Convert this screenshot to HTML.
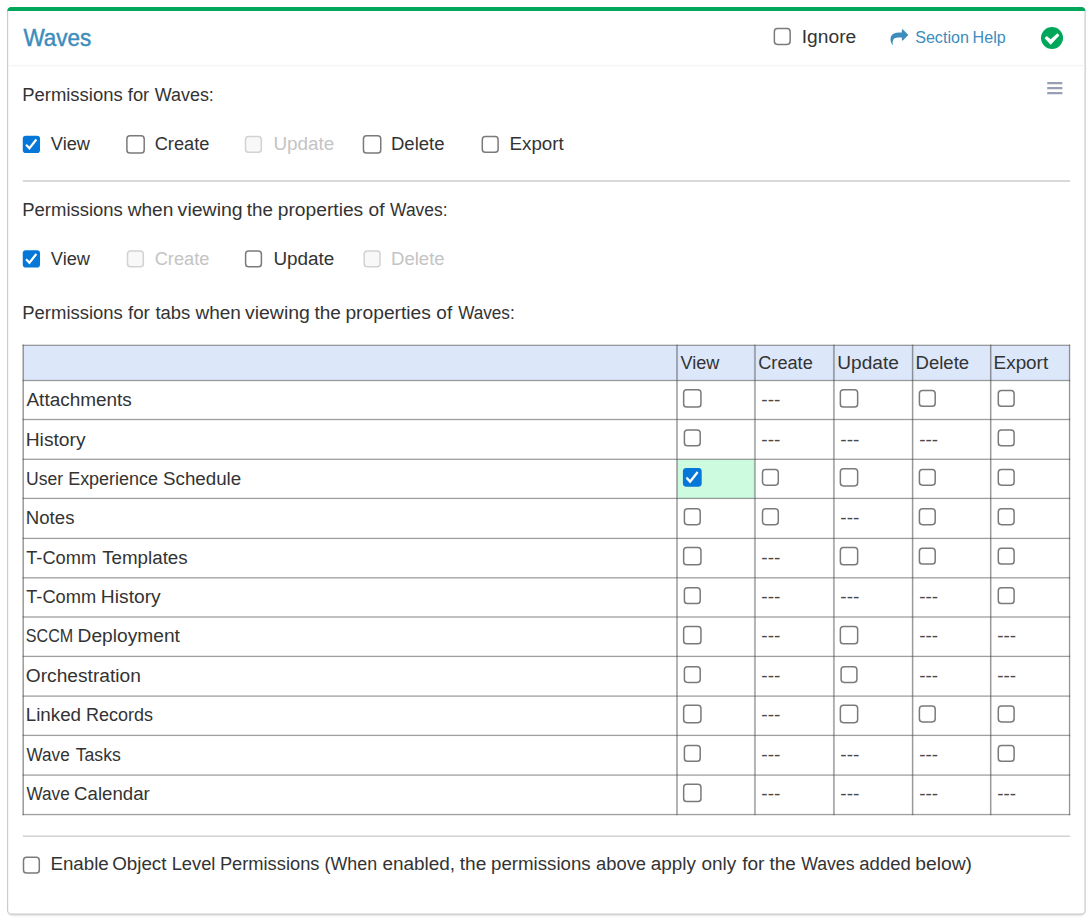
<!DOCTYPE html>
<html lang="en"><head><meta charset="utf-8"><title>Waves permissions</title>
<style>
html,body{margin:0;padding:0;background:#fff;}
body{width:1091px;height:921px;overflow:hidden;}
svg{display:block}
svg text{font-family:"Liberation Sans",sans-serif;white-space:pre}
</style></head><body>
<svg width="1091" height="921" viewBox="0 0 1091 921">
<defs><filter id="sh" x="-5%" y="-5%" width="110%" height="110%"><feGaussianBlur stdDeviation="1.2"/></filter></defs>
<rect x="8.5" y="10" width="1076" height="905.6" rx="4" fill="#000" opacity="0.16" filter="url(#sh)"/>
<rect x="7.6" y="7.6" width="1077.5" height="906.6" rx="4" fill="#fff" stroke="#cbcbcb" stroke-width="1.2"/>
<path d="M7.4 11 V10.6 A4 4 0 0 1 11.4 6.9 H1081.3 A4 4 0 0 1 1085.3 10.6 V11 Z" fill="#00a65a"/>
<rect x="8.2" y="64.9" width="1076.2" height="1.4" fill="#f4f4f4"/>
<rect x="22.8" y="180" width="1047.3" height="2" fill="#d9d9d9"/>
<rect x="22.8" y="835.4" width="1047.3" height="1.6" fill="#d4d4d4"/>
<g transform="translate(890.5,28.6) scale(0.00985)" fill="#3c8dbc"><path d="M1792 640q0 26-19 45l-512 512q-19 19-45 19t-45-19-19-45v-256h-224q-98 0-175.500 6t-154 21.500-133 42.500-105.500 69.500-80 101-48.500 138.500-17.500 181q0 55 5 123 0 6 2.500 23.500t2.500 26.500q0 15-8.500 25t-23.500 10q-16 0-28-17-7-9-13-22t-13.500-30-10.500-24q-127-285-127-451 0-199 53-333 162-403 875-403h224v-256q0-26 19-45t45-19 45 19l512 512q19 19 19 45z"/></g>
<circle cx="1052" cy="38" r="11" fill="#00a65a"/>
<polygon points="1044.6,38.16 1046.68,36.07 1050.68,39.37 1057.45,33.29 1059.36,35.38 1050.68,44.76" fill="#fff"/>
<rect x="1047.2" y="82.05" width="15.2" height="2.3" rx="0.5" fill="#97a0b3"/>
<rect x="1047.2" y="87.00" width="15.2" height="2.3" rx="0.5" fill="#97a0b3"/>
<rect x="1047.2" y="91.95" width="15.2" height="2.3" rx="0.5" fill="#97a0b3"/>
<rect x="774.35" y="28.60" width="15.80" height="15.80" rx="3.1" fill="#fff" stroke="#7a7a7a" stroke-width="1.5"/>
<rect x="22.75" y="135.80" width="17.30" height="17.30" rx="3.10" fill="#0577d8"/><polygon points="25.33,145.53 26.70,144.01 29.38,146.59 35.52,138.78 37.19,140.36 29.44,150.09" fill="#fff"/>
<rect x="126.90" y="135.80" width="17.30" height="17.30" rx="3.1" fill="#fff" stroke="#7a7a7a" stroke-width="1.5"/>
<rect x="245.50" y="136.55" width="15.80" height="15.80" rx="3.1" fill="#f8f8f8" stroke="#d2d2d2" stroke-width="1.5"/>
<rect x="363.45" y="135.80" width="17.30" height="17.30" rx="3.1" fill="#fff" stroke="#7a7a7a" stroke-width="1.5"/>
<rect x="482.30" y="136.55" width="15.80" height="15.80" rx="3.1" fill="#fff" stroke="#7a7a7a" stroke-width="1.5"/>
<rect x="22.75" y="250.20" width="17.30" height="17.30" rx="3.10" fill="#0577d8"/><polygon points="25.33,259.93 26.70,258.41 29.38,260.99 35.52,253.18 37.19,254.76 29.44,264.49" fill="#fff"/>
<rect x="127.50" y="250.95" width="15.80" height="15.80" rx="3.1" fill="#f8f8f8" stroke="#d2d2d2" stroke-width="1.5"/>
<rect x="245.60" y="250.95" width="15.80" height="15.80" rx="3.1" fill="#fff" stroke="#7a7a7a" stroke-width="1.5"/>
<rect x="364.20" y="250.95" width="15.80" height="15.80" rx="3.1" fill="#f8f8f8" stroke="#d2d2d2" stroke-width="1.5"/>
<rect x="23.50" y="857.30" width="15.80" height="15.80" rx="3.1" fill="#fff" stroke="#7a7a7a" stroke-width="1.5"/>
<rect x="23.2" y="345.3" width="1046.35" height="35.20" fill="#dce7fa"/>
<rect x="677.00" y="459.30" width="77.95" height="39.10" fill="#cdfbe0"/>
<rect x="22.50" y="344.65" width="1047.70" height="1.3" fill="#505050" fill-opacity="0.55"/>
<rect x="22.50" y="379.85" width="1047.70" height="1.3" fill="#505050" fill-opacity="0.55"/>
<rect x="22.50" y="418.85" width="1047.70" height="1.3" fill="#505050" fill-opacity="0.55"/>
<rect x="22.50" y="458.65" width="1047.70" height="1.3" fill="#505050" fill-opacity="0.55"/>
<rect x="22.50" y="497.75" width="1047.70" height="1.3" fill="#505050" fill-opacity="0.55"/>
<rect x="22.50" y="537.75" width="1047.70" height="1.3" fill="#505050" fill-opacity="0.55"/>
<rect x="22.50" y="577.15" width="1047.70" height="1.3" fill="#505050" fill-opacity="0.55"/>
<rect x="22.50" y="616.35" width="1047.70" height="1.3" fill="#505050" fill-opacity="0.55"/>
<rect x="22.50" y="655.75" width="1047.70" height="1.3" fill="#505050" fill-opacity="0.55"/>
<rect x="22.50" y="695.45" width="1047.70" height="1.3" fill="#505050" fill-opacity="0.55"/>
<rect x="22.50" y="734.75" width="1047.70" height="1.3" fill="#505050" fill-opacity="0.55"/>
<rect x="22.50" y="774.45" width="1047.70" height="1.3" fill="#505050" fill-opacity="0.55"/>
<rect x="22.50" y="813.90" width="1047.70" height="1.3" fill="#505050" fill-opacity="0.55"/>
<rect x="22.50" y="344.65" width="1.4" height="470.55" fill="#505050" fill-opacity="0.62"/>
<rect x="676.00" y="344.65" width="2.0" height="470.55" fill="#505050" fill-opacity="0.43"/>
<rect x="753.95" y="344.65" width="2.0" height="470.55" fill="#505050" fill-opacity="0.43"/>
<rect x="832.95" y="344.65" width="1.9" height="470.55" fill="#505050" fill-opacity="0.46"/>
<rect x="911.85" y="344.65" width="1.5" height="470.55" fill="#505050" fill-opacity="0.58"/>
<rect x="989.95" y="344.65" width="1.5" height="470.55" fill="#505050" fill-opacity="0.58"/>
<rect x="1068.90" y="344.65" width="1.3" height="470.55" fill="#505050" fill-opacity="0.62"/>
<rect x="683.65" y="389.75" width="17.30" height="17.30" rx="3.1" fill="#fff" stroke="#7a7a7a" stroke-width="1.5"/>
<rect x="840.35" y="389.75" width="17.30" height="17.30" rx="3.1" fill="#fff" stroke="#7a7a7a" stroke-width="1.5"/>
<rect x="919.40" y="390.50" width="15.80" height="15.80" rx="3.1" fill="#fff" stroke="#7a7a7a" stroke-width="1.5"/>
<rect x="998.30" y="390.50" width="15.80" height="15.80" rx="3.1" fill="#fff" stroke="#7a7a7a" stroke-width="1.5"/>
<rect x="684.40" y="429.95" width="15.80" height="15.80" rx="3.1" fill="#fff" stroke="#7a7a7a" stroke-width="1.5"/>
<rect x="998.30" y="429.95" width="15.80" height="15.80" rx="3.1" fill="#fff" stroke="#7a7a7a" stroke-width="1.5"/>
<rect x="682.90" y="467.90" width="18.80" height="18.80" rx="3.37" fill="#0577d8"/><polygon points="685.70,478.47 687.19,476.82 690.10,479.63 696.78,471.14 698.59,472.86 690.17,483.43" fill="#fff"/>
<rect x="762.50" y="469.40" width="15.80" height="15.80" rx="3.1" fill="#fff" stroke="#7a7a7a" stroke-width="1.5"/>
<rect x="840.35" y="468.65" width="17.30" height="17.30" rx="3.1" fill="#fff" stroke="#7a7a7a" stroke-width="1.5"/>
<rect x="919.40" y="469.40" width="15.80" height="15.80" rx="3.1" fill="#fff" stroke="#7a7a7a" stroke-width="1.5"/>
<rect x="998.30" y="469.40" width="15.80" height="15.80" rx="3.1" fill="#fff" stroke="#7a7a7a" stroke-width="1.5"/>
<rect x="684.40" y="508.85" width="15.80" height="15.80" rx="3.1" fill="#fff" stroke="#7a7a7a" stroke-width="1.5"/>
<rect x="762.50" y="508.85" width="15.80" height="15.80" rx="3.1" fill="#fff" stroke="#7a7a7a" stroke-width="1.5"/>
<rect x="919.40" y="508.85" width="15.80" height="15.80" rx="3.1" fill="#fff" stroke="#7a7a7a" stroke-width="1.5"/>
<rect x="998.30" y="508.85" width="15.80" height="15.80" rx="3.1" fill="#fff" stroke="#7a7a7a" stroke-width="1.5"/>
<rect x="683.65" y="547.55" width="17.30" height="17.30" rx="3.1" fill="#fff" stroke="#7a7a7a" stroke-width="1.5"/>
<rect x="840.35" y="547.55" width="17.30" height="17.30" rx="3.1" fill="#fff" stroke="#7a7a7a" stroke-width="1.5"/>
<rect x="919.40" y="548.30" width="15.80" height="15.80" rx="3.1" fill="#fff" stroke="#7a7a7a" stroke-width="1.5"/>
<rect x="998.30" y="548.30" width="15.80" height="15.80" rx="3.1" fill="#fff" stroke="#7a7a7a" stroke-width="1.5"/>
<rect x="684.40" y="587.75" width="15.80" height="15.80" rx="3.1" fill="#fff" stroke="#7a7a7a" stroke-width="1.5"/>
<rect x="998.30" y="587.75" width="15.80" height="15.80" rx="3.1" fill="#fff" stroke="#7a7a7a" stroke-width="1.5"/>
<rect x="683.65" y="626.45" width="17.30" height="17.30" rx="3.1" fill="#fff" stroke="#7a7a7a" stroke-width="1.5"/>
<rect x="840.35" y="626.45" width="17.30" height="17.30" rx="3.1" fill="#fff" stroke="#7a7a7a" stroke-width="1.5"/>
<rect x="684.40" y="666.65" width="15.80" height="15.80" rx="3.1" fill="#fff" stroke="#7a7a7a" stroke-width="1.5"/>
<rect x="841.10" y="666.65" width="15.80" height="15.80" rx="3.1" fill="#fff" stroke="#7a7a7a" stroke-width="1.5"/>
<rect x="683.65" y="705.35" width="17.30" height="17.30" rx="3.1" fill="#fff" stroke="#7a7a7a" stroke-width="1.5"/>
<rect x="840.35" y="705.35" width="17.30" height="17.30" rx="3.1" fill="#fff" stroke="#7a7a7a" stroke-width="1.5"/>
<rect x="919.40" y="706.10" width="15.80" height="15.80" rx="3.1" fill="#fff" stroke="#7a7a7a" stroke-width="1.5"/>
<rect x="998.30" y="706.10" width="15.80" height="15.80" rx="3.1" fill="#fff" stroke="#7a7a7a" stroke-width="1.5"/>
<rect x="684.40" y="745.55" width="15.80" height="15.80" rx="3.1" fill="#fff" stroke="#7a7a7a" stroke-width="1.5"/>
<rect x="998.30" y="745.55" width="15.80" height="15.80" rx="3.1" fill="#fff" stroke="#7a7a7a" stroke-width="1.5"/>
<rect x="683.65" y="784.25" width="17.30" height="17.30" rx="3.1" fill="#fff" stroke="#7a7a7a" stroke-width="1.5"/>
<text y="46.00" font-size="23.2" fill="#3c8dbc" stroke="#3c8dbc" stroke-width="0.45"><tspan x="23.39" textLength="67.94" lengthAdjust="spacingAndGlyphs">Waves</tspan></text>
<text y="43.00" font-size="18.0" fill="#333333" ><tspan x="801.77" textLength="54.45" lengthAdjust="spacingAndGlyphs">Ignore</tspan></text>
<text y="43.00" font-size="15.6" fill="#3c8dbc" ><tspan x="915.17" textLength="53.76" lengthAdjust="spacingAndGlyphs">Section</tspan> <tspan x="972.55" textLength="33.12" lengthAdjust="spacingAndGlyphs">Help</tspan></text>
<text y="101.00" font-size="18.0" fill="#333333" ><tspan x="22.24" textLength="100.38" lengthAdjust="spacingAndGlyphs">Permissions</tspan> <tspan x="127.81" textLength="21.43" lengthAdjust="spacingAndGlyphs">for</tspan> <tspan x="154.73" textLength="59.14" lengthAdjust="spacingAndGlyphs">Waves:</tspan></text>
<text y="150.00" font-size="18.0" fill="#333333" ><tspan x="50.80" textLength="39.22" lengthAdjust="spacingAndGlyphs">View</tspan></text>
<text y="150.00" font-size="18.0" fill="#333333" ><tspan x="154.73" textLength="54.67" lengthAdjust="spacingAndGlyphs">Create</tspan></text>
<text y="150.00" font-size="18.0" fill="#c4c4c4" ><tspan x="273.41" textLength="60.98" lengthAdjust="spacingAndGlyphs">Update</tspan></text>
<text y="150.00" font-size="18.0" fill="#333333" ><tspan x="390.99" textLength="53.58" lengthAdjust="spacingAndGlyphs">Delete</tspan></text>
<text y="150.00" font-size="18.0" fill="#333333" ><tspan x="509.51" textLength="54.31" lengthAdjust="spacingAndGlyphs">Export</tspan></text>
<text y="216.00" font-size="18.0" fill="#333333" ><tspan x="22.28" textLength="100.59" lengthAdjust="spacingAndGlyphs">Permissions</tspan> <tspan x="127.65" textLength="45.67" lengthAdjust="spacingAndGlyphs">when</tspan> <tspan x="177.64" textLength="65.05" lengthAdjust="spacingAndGlyphs">viewing</tspan> <tspan x="246.87" textLength="26.11" lengthAdjust="spacingAndGlyphs">the</tspan> <tspan x="277.80" textLength="85.41" lengthAdjust="spacingAndGlyphs">properties</tspan> <tspan x="368.54" textLength="15.92" lengthAdjust="spacingAndGlyphs">of</tspan> <tspan x="390.11" textLength="57.38" lengthAdjust="spacingAndGlyphs">Waves:</tspan></text>
<text y="265.00" font-size="18.0" fill="#333333" ><tspan x="50.80" textLength="39.22" lengthAdjust="spacingAndGlyphs">View</tspan></text>
<text y="265.00" font-size="18.0" fill="#c4c4c4" ><tspan x="154.73" textLength="54.67" lengthAdjust="spacingAndGlyphs">Create</tspan></text>
<text y="265.00" font-size="18.0" fill="#333333" ><tspan x="273.41" textLength="60.98" lengthAdjust="spacingAndGlyphs">Update</tspan></text>
<text y="265.00" font-size="18.0" fill="#c4c4c4" ><tspan x="391.08" textLength="53.51" lengthAdjust="spacingAndGlyphs">Delete</tspan></text>
<text y="319.00" font-size="18.0" fill="#333333" ><tspan x="22.28" textLength="100.59" lengthAdjust="spacingAndGlyphs">Permissions</tspan> <tspan x="128.01" textLength="21.86" lengthAdjust="spacingAndGlyphs">for</tspan> <tspan x="155.49" textLength="34.82" lengthAdjust="spacingAndGlyphs">tabs</tspan> <tspan x="195.46" textLength="45.40" lengthAdjust="spacingAndGlyphs">when</tspan> <tspan x="244.97" textLength="64.95" lengthAdjust="spacingAndGlyphs">viewing</tspan> <tspan x="314.41" textLength="26.41" lengthAdjust="spacingAndGlyphs">the</tspan> <tspan x="345.45" textLength="85.45" lengthAdjust="spacingAndGlyphs">properties</tspan> <tspan x="436.35" textLength="15.80" lengthAdjust="spacingAndGlyphs">of</tspan> <tspan x="458.13" textLength="56.59" lengthAdjust="spacingAndGlyphs">Waves:</tspan></text>
<text y="369.00" font-size="18.0" fill="#333333" ><tspan x="680.41" textLength="38.91" lengthAdjust="spacingAndGlyphs">View</tspan></text>
<text y="369.00" font-size="18.0" fill="#333333" ><tspan x="758.23" textLength="54.53" lengthAdjust="spacingAndGlyphs">Create</tspan></text>
<text y="369.00" font-size="18.0" fill="#333333" ><tspan x="837.33" textLength="61.48" lengthAdjust="spacingAndGlyphs">Update</tspan></text>
<text y="369.00" font-size="18.0" fill="#333333" ><tspan x="915.57" textLength="53.54" lengthAdjust="spacingAndGlyphs">Delete</tspan></text>
<text y="369.00" font-size="18.0" fill="#333333" ><tspan x="993.63" textLength="54.52" lengthAdjust="spacingAndGlyphs">Export</tspan></text>
<text y="870.00" font-size="18.0" fill="#333333" ><tspan x="50.42" textLength="58.31" lengthAdjust="spacingAndGlyphs">Enable</tspan> <tspan x="112.18" textLength="54.31" lengthAdjust="spacingAndGlyphs">Object</tspan> <tspan x="171.68" textLength="43.77" lengthAdjust="spacingAndGlyphs">Level</tspan> <tspan x="219.90" textLength="99.55" lengthAdjust="spacingAndGlyphs">Permissions</tspan> <tspan x="324.54" textLength="52.60" lengthAdjust="spacingAndGlyphs">(When</tspan> <tspan x="382.44" textLength="72.68" lengthAdjust="spacingAndGlyphs">enabled,</tspan> <tspan x="459.77" textLength="26.59" lengthAdjust="spacingAndGlyphs">the</tspan> <tspan x="491.03" textLength="99.66" lengthAdjust="spacingAndGlyphs">permissions</tspan> <tspan x="596.07" textLength="49.96" lengthAdjust="spacingAndGlyphs">above</tspan> <tspan x="650.88" textLength="45.13" lengthAdjust="spacingAndGlyphs">apply</tspan> <tspan x="701.48" textLength="34.82" lengthAdjust="spacingAndGlyphs">only</tspan> <tspan x="742.17" textLength="22.26" lengthAdjust="spacingAndGlyphs">for</tspan> <tspan x="769.49" textLength="26.28" lengthAdjust="spacingAndGlyphs">the</tspan> <tspan x="801.15" textLength="53.36" lengthAdjust="spacingAndGlyphs">Waves</tspan> <tspan x="859.34" textLength="51.45" lengthAdjust="spacingAndGlyphs">added</tspan> <tspan x="915.18" textLength="56.86" lengthAdjust="spacingAndGlyphs">below)</tspan></text>
<text y="406.00" font-size="18.0" fill="#333333" ><tspan x="26.48" textLength="105.38" lengthAdjust="spacingAndGlyphs">Attachments</tspan></text>
<text y="446.00" font-size="18.0" fill="#333333" ><tspan x="25.73" textLength="59.88" lengthAdjust="spacingAndGlyphs">History</tspan></text>
<text y="485.00" font-size="18.0" fill="#333333" ><tspan x="26.03" textLength="37.06" lengthAdjust="spacingAndGlyphs">User</tspan> <tspan x="68.15" textLength="89.95" lengthAdjust="spacingAndGlyphs">Experience</tspan> <tspan x="163.04" textLength="78.13" lengthAdjust="spacingAndGlyphs">Schedule</tspan></text>
<text y="524.00" font-size="18.0" fill="#333333" ><tspan x="25.82" textLength="48.64" lengthAdjust="spacingAndGlyphs">Notes</tspan></text>
<text y="564.00" font-size="18.0" fill="#333333" ><tspan x="26.18" textLength="69.90" lengthAdjust="spacingAndGlyphs">T-Comm</tspan> <tspan x="102.17" textLength="85.53" lengthAdjust="spacingAndGlyphs">Templates</tspan></text>
<text y="603.00" font-size="18.0" fill="#333333" ><tspan x="26.18" textLength="69.90" lengthAdjust="spacingAndGlyphs">T-Comm</tspan> <tspan x="100.88" textLength="59.80" lengthAdjust="spacingAndGlyphs">History</tspan></text>
<text y="642.00" font-size="18.0" fill="#333333" ><tspan x="25.80" textLength="47.36" lengthAdjust="spacingAndGlyphs">SCCM</tspan> <tspan x="77.61" textLength="102.26" lengthAdjust="spacingAndGlyphs">Deployment</tspan></text>
<text y="682.00" font-size="18.0" fill="#333333" ><tspan x="25.84" textLength="115.04" lengthAdjust="spacingAndGlyphs">Orchestration</tspan></text>
<text y="721.00" font-size="18.0" fill="#333333" ><tspan x="25.73" textLength="55.32" lengthAdjust="spacingAndGlyphs">Linked</tspan> <tspan x="85.96" textLength="66.96" lengthAdjust="spacingAndGlyphs">Records</tspan></text>
<text y="761.00" font-size="18.0" fill="#333333" ><tspan x="26.52" textLength="43.23" lengthAdjust="spacingAndGlyphs">Wave</tspan> <tspan x="75.69" textLength="45.10" lengthAdjust="spacingAndGlyphs">Tasks</tspan></text>
<text y="800.00" font-size="18.0" fill="#333333" ><tspan x="26.52" textLength="43.23" lengthAdjust="spacingAndGlyphs">Wave</tspan> <tspan x="74.10" textLength="75.67" lengthAdjust="spacingAndGlyphs">Calendar</tspan></text>
<text y="406.00" font-size="18.0" fill="#484848" ><tspan x="761.33" textLength="18.98" lengthAdjust="spacingAndGlyphs">---</tspan></text>
<text y="446.00" font-size="18.0" fill="#484848" ><tspan x="761.33" textLength="18.98" lengthAdjust="spacingAndGlyphs">---</tspan></text>
<text y="446.00" font-size="18.0" fill="#484848" ><tspan x="840.31" textLength="19.05" lengthAdjust="spacingAndGlyphs">---</tspan></text>
<text y="446.00" font-size="18.0" fill="#484848" ><tspan x="919.17" textLength="18.89" lengthAdjust="spacingAndGlyphs">---</tspan></text>
<text y="524.00" font-size="18.0" fill="#484848" ><tspan x="840.31" textLength="19.05" lengthAdjust="spacingAndGlyphs">---</tspan></text>
<text y="564.00" font-size="18.0" fill="#484848" ><tspan x="761.33" textLength="18.98" lengthAdjust="spacingAndGlyphs">---</tspan></text>
<text y="603.00" font-size="18.0" fill="#484848" ><tspan x="761.33" textLength="18.98" lengthAdjust="spacingAndGlyphs">---</tspan></text>
<text y="603.00" font-size="18.0" fill="#484848" ><tspan x="840.31" textLength="19.05" lengthAdjust="spacingAndGlyphs">---</tspan></text>
<text y="603.00" font-size="18.0" fill="#484848" ><tspan x="919.17" textLength="18.89" lengthAdjust="spacingAndGlyphs">---</tspan></text>
<text y="642.00" font-size="18.0" fill="#484848" ><tspan x="761.33" textLength="18.98" lengthAdjust="spacingAndGlyphs">---</tspan></text>
<text y="642.00" font-size="18.0" fill="#484848" ><tspan x="919.17" textLength="18.89" lengthAdjust="spacingAndGlyphs">---</tspan></text>
<text y="642.00" font-size="18.0" fill="#484848" ><tspan x="997.28" textLength="18.79" lengthAdjust="spacingAndGlyphs">---</tspan></text>
<text y="682.00" font-size="18.0" fill="#484848" ><tspan x="761.33" textLength="18.98" lengthAdjust="spacingAndGlyphs">---</tspan></text>
<text y="682.00" font-size="18.0" fill="#484848" ><tspan x="919.17" textLength="18.89" lengthAdjust="spacingAndGlyphs">---</tspan></text>
<text y="682.00" font-size="18.0" fill="#484848" ><tspan x="997.28" textLength="18.79" lengthAdjust="spacingAndGlyphs">---</tspan></text>
<text y="721.00" font-size="18.0" fill="#484848" ><tspan x="761.33" textLength="18.98" lengthAdjust="spacingAndGlyphs">---</tspan></text>
<text y="761.00" font-size="18.0" fill="#484848" ><tspan x="761.33" textLength="18.98" lengthAdjust="spacingAndGlyphs">---</tspan></text>
<text y="761.00" font-size="18.0" fill="#484848" ><tspan x="840.31" textLength="19.05" lengthAdjust="spacingAndGlyphs">---</tspan></text>
<text y="761.00" font-size="18.0" fill="#484848" ><tspan x="919.17" textLength="18.89" lengthAdjust="spacingAndGlyphs">---</tspan></text>
<text y="800.00" font-size="18.0" fill="#484848" ><tspan x="761.33" textLength="18.98" lengthAdjust="spacingAndGlyphs">---</tspan></text>
<text y="800.00" font-size="18.0" fill="#484848" ><tspan x="840.31" textLength="19.05" lengthAdjust="spacingAndGlyphs">---</tspan></text>
<text y="800.00" font-size="18.0" fill="#484848" ><tspan x="919.17" textLength="18.89" lengthAdjust="spacingAndGlyphs">---</tspan></text>
<text y="800.00" font-size="18.0" fill="#484848" ><tspan x="997.28" textLength="18.79" lengthAdjust="spacingAndGlyphs">---</tspan></text>
</svg>
</body></html>
